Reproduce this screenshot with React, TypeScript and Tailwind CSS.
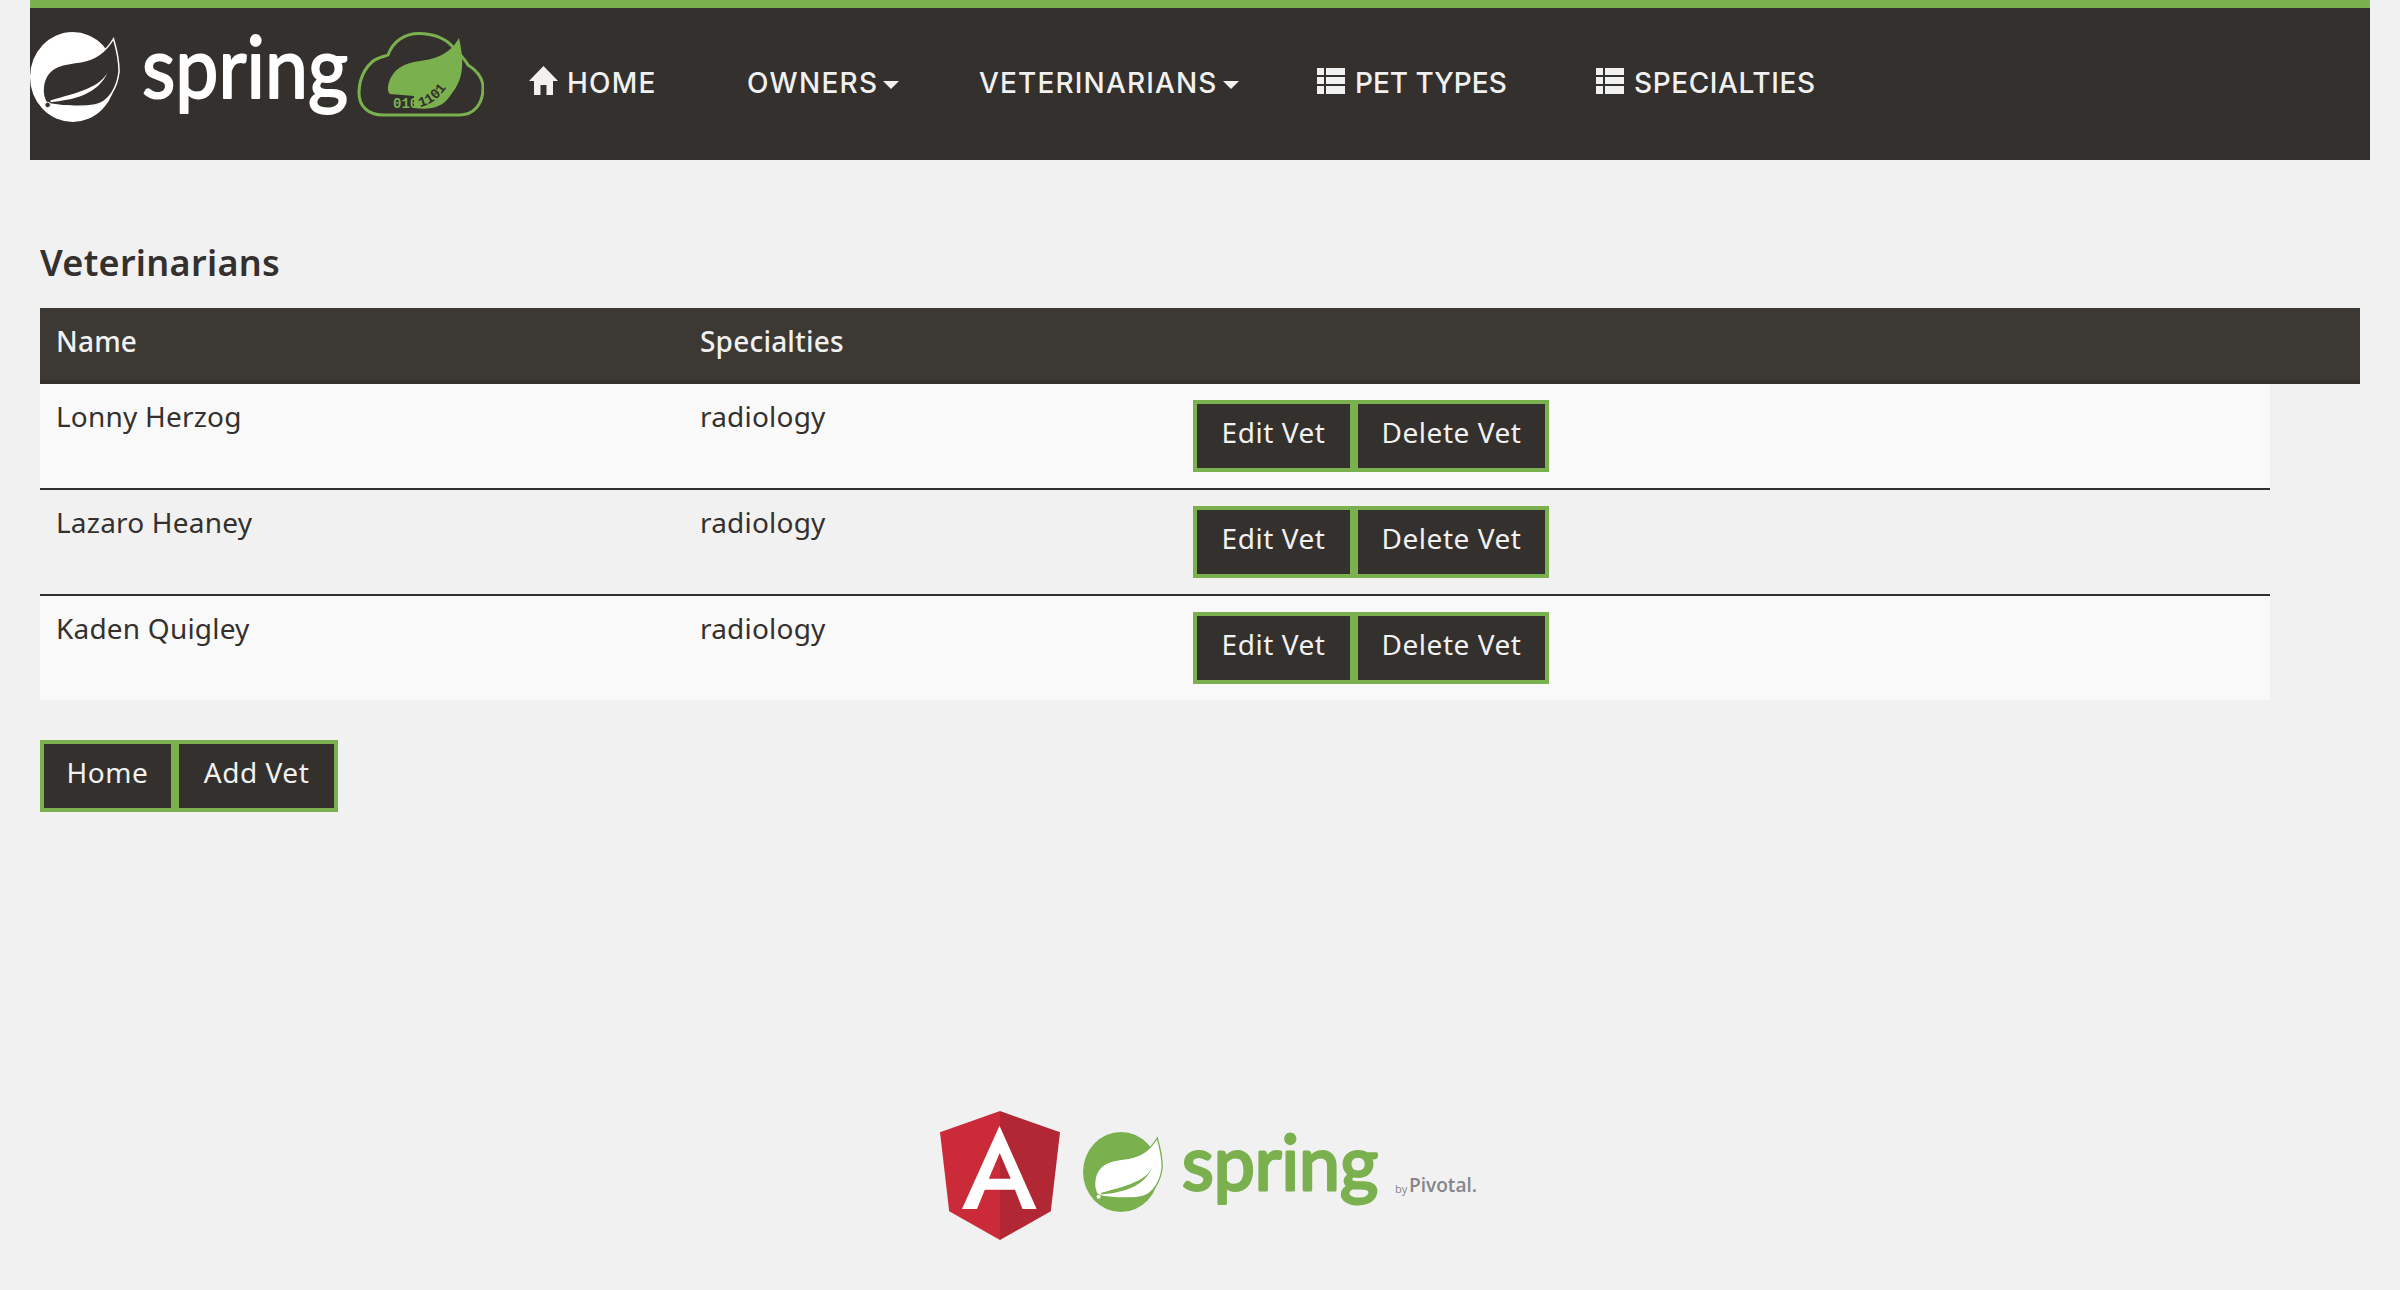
import { ReactNode } from "react";

const GREEN = "#7bb04f";
const DARK = "#34302d";

const vets = ["Lonny Herzog", "Lazaro Heaney", "Kaden Quigley"];

function SpringLeaf({ body, leaf, className }: { body: string; leaf: string; className: string }) {
  return (
    <svg viewBox="0 0 97 100" preserveAspectRatio="none" className={className}>
      <ellipse cx="46" cy="50" rx="46" ry="50" fill={body} />
      <path
        d="M90 7.5 C80 25 68 31 55 33 C40 35 27 37 20 46 C13 55 12 70 18 79 C30 82 55 84 70 81 C85 78 94 62 96 44 C96 30 93 18 90 7.5Z"
        fill={leaf}
        stroke={body}
        strokeWidth="1.6"
      />
      <path d="M22 78 C45 76 74 70 84 44 C76 62 50 68 22 76Z" fill={body} />
      <circle cx="19" cy="81" r="3" fill={leaf} stroke={body} strokeWidth="1" />
    </svg>
  );
}

function NavLogo() {
  return (
    <div className="flex h-[114px] w-[454px] shrink-0 items-start">
      <SpringLeaf body="#ffffff" leaf={DARK} className="mt-[24px] h-[90px] w-[90px] shrink-0" />
      <svg viewBox="0 -24 364 114" className="h-[114px] w-[364px] shrink-0">
        <text
          x="22"
          y="66"
          fontFamily="Lato, sans-serif"
          fontSize="85"
          fill="#ffffff"
          stroke="#ffffff"
          strokeWidth="2"
          strokeLinejoin="round"
          textLength="206"
          lengthAdjust="spacingAndGlyphs"
        >
          spring
        </text>
        <g transform="translate(238 0)">
          <path
            d="M25 83 C10 83 1 74 1 61 C1 44 10 30 21 26 C25 24 28 24 30 23 C35 9 47 1.5 61 1.5 C76 1.5 88 7 94 14 C100 20 107 27 110 33 C118 38 125 46 125 56 C125 72 116 83 101 83 Z"
            fill="none"
            stroke={GREEN}
            strokeWidth="3"
          />
          <path d="M101 6 C92 22 78 27 62 29 C45 31 35 38 31 50 C29 56 30 60 32 62 L56 64 L56 76 C72 78 84 76 92 64 C103 50 108 38 101 6Z" fill={GREEN} />
          <text x="35" y="76" fontFamily="'Liberation Mono', monospace" fontSize="14" fontWeight="700" fill={GREEN}>
            010
          </text>
          <path id="binaryCurve" d="M62 75 C76 72 90 60 99 34" fill="none" />
          <text fontFamily="'Liberation Mono', monospace" fontSize="14" fontWeight="700" fill={DARK}>
            <textPath href="#binaryCurve">1101</textPath>
          </text>
        </g>
      </svg>
    </div>
  );
}

function HomeIcon() {
  return (
    <svg viewBox="0 0 29 29" className="h-[29px] w-[29px] shrink-0" fill="#f1f1f1">
      <path d="M14.5 0 L29 15 L24 15 L24 29 L17.5 29 L17.5 19 L11.5 19 L11.5 29 L5 29 L5 15 L0 15 Z" />
    </svg>
  );
}

function ListIcon() {
  return (
    <svg viewBox="0 0 28 26" className="h-[26px] w-[28px] shrink-0" fill="#f1f1f1">
      <rect x="0" y="0" width="7" height="7" />
      <rect x="9" y="0" width="19" height="7" />
      <rect x="0" y="9" width="7" height="7" />
      <rect x="9" y="9" width="19" height="7" />
      <rect x="0" y="18" width="7" height="8" />
      <rect x="9" y="18" width="19" height="8" />
    </svg>
  );
}

function Caret() {
  return <span className="ml-[5px] mt-[8px] h-0 w-0 border-x-[8px] border-t-[8px] border-x-transparent border-t-[#f1f1f1]" />;
}

function NavItem({ icon, label, caret, className }: { icon?: ReactNode; label: string; caret?: boolean; className: string }) {
  return (
    <a className={`flex items-center whitespace-nowrap text-[28px] font-medium leading-none text-[#f1f1f1] ${className}`}>
      {icon}
      <span className="mt-[5px]">{label}</span>
      {caret && <Caret />}
    </a>
  );
}

function Btn({ children, className }: { children: ReactNode; className: string }) {
  return (
    <button className={`flex h-[72px] items-center justify-center border-4 border-[#7bb04f] bg-[#34302d] pb-[8px] text-[28px] tracking-[0.55px] text-[#f1f1f1] ${className}`}>
      {children}
    </button>
  );
}

function App() {
  return (
    <div className="min-h-screen bg-[#f1f1f1] font-['Noto_Sans',sans-serif] text-[#34302d]">
      <nav className="mx-[30px] flex h-[160px] border-t-8 border-[#7bb04f] bg-[#34302d] font-['Inter',sans-serif]">
        <NavLogo />
        <div className="mt-[58px] flex h-[29px] items-center">
          <NavItem className="ml-[45px] w-[127px] gap-[9px] tracking-[1.2px]" icon={<HomeIcon />} label="HOME" />
          <NavItem className="ml-[91px] w-[153px] tracking-[1.3px]" label="OWNERS" caret />
          <NavItem className="ml-[79px] w-[257px] tracking-[1.15px]" label="VETERINARIANS" caret />
          <NavItem className="ml-[81px] w-[188px] gap-[10px] tracking-[0px]" icon={<ListIcon />} label="PET TYPES" />
          <NavItem className="ml-[91px] gap-[10px] tracking-[0.6px]" icon={<ListIcon />} label="SPECIALTIES" />
        </div>
      </nav>

      <main className="px-[40px] pt-[80px]">
        <h2 className="h-[68px] text-[36px] font-semibold leading-[46px] tracking-[0.3px]">Veterinarians</h2>

        <div className="flex h-[76px] border-b-4 border-[#34302d] bg-[#3c3834] pt-[13px] text-[28px] font-medium leading-[40px] tracking-[0.2px] text-[#f1f1f1]">
          <div className="w-[644px] pl-[16px]">Name</div>
          <div className="pl-[16px]">Specialties</div>
        </div>

        <div className="w-[2230px]">
          {vets.map((name, i) => (
            <div
              key={name}
              className={`flex pt-[16px] text-[28px] leading-[40px] tracking-[0.2px] ${i % 2 === 0 ? "bg-[#f9f9f9]" : ""} ${
                i < 2 ? "h-[106px] border-b-2 border-[#34302d]" : "h-[104px]"
              }`}
            >
              <div className="-mt-[4px] w-[644px] pl-[16px]">{name}</div>
              <div className="-mt-[4px] w-[509px] pl-[16px]">radiology</div>
              <div className="flex">
                <Btn className="w-[161px]">Edit Vet</Btn>
                <Btn className="w-[195px]">Delete Vet</Btn>
              </div>
            </div>
          ))}
        </div>

        <div className="mt-[40px] flex">
          <Btn className="w-[135px]">Home</Btn>
          <Btn className="w-[163px]">Add Vet</Btn>
        </div>
      </main>

      <footer className="mt-[299px] flex items-start justify-center pl-[23px]">
        <svg viewBox="0 0 120 129" className="h-[129px] w-[120px] shrink-0">
          <polygon points="60,0 0,21.3 9.2,100.3 60,129" fill="#cb2b38" />
          <polygon points="60,0 120,21.3 110.8,100.3 60,129" fill="#b12733" />
          <path d="M59.5 14.7 L22 98 L37 98 L44.8 78.7 L75 78.7 L82.5 98 L96.6 98 Z M59.7 42 L48.8 67.7 L70.7 67.7 Z" fill="#ffffff" fillRule="evenodd" />
        </svg>
        <div className="ml-[23px] mt-[21px]">
          <SpringLeaf body={GREEN} leaf="#ffffff" className="h-[80px] w-[80px]" />
        </div>
        <svg viewBox="0 0 320 129" className="h-[129px] w-[320px] shrink-0">
          <text
            x="19"
            y="79"
            fontFamily="Lato, sans-serif"
            fontSize="75"
            fill={GREEN}
            stroke={GREEN}
            strokeWidth="3"
            strokeLinejoin="round"
            textLength="196"
            lengthAdjust="spacingAndGlyphs"
          >
            spring
          </text>
          <text x="232" y="82" fontFamily="'Open Sans', sans-serif" fontSize="11" fill="#85858a">
            by
          </text>
          <text x="246" y="81" fontFamily="'Open Sans', sans-serif" fontSize="20" fontWeight="600" fill="#85858a" textLength="68" lengthAdjust="spacingAndGlyphs">
            Pivotal.
          </text>
        </svg>
      </footer>
    </div>
  );
}

export default App;
